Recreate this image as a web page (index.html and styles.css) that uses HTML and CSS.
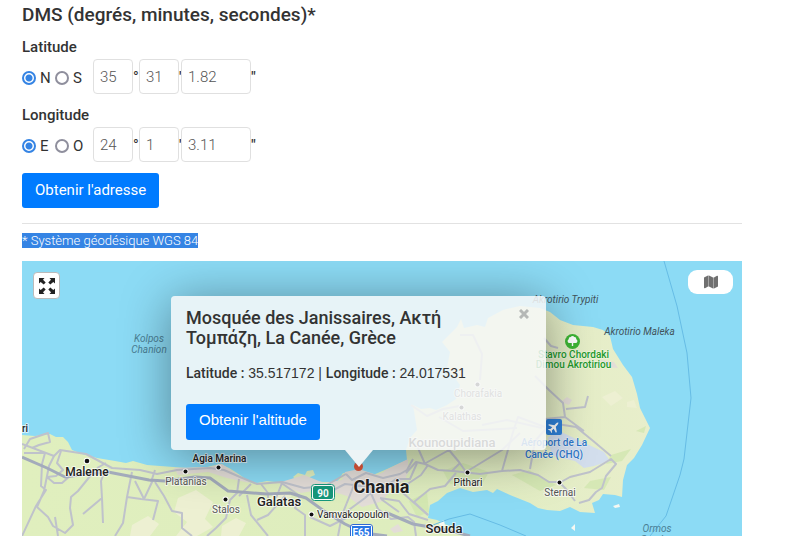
FILE: index.html
```html
<!DOCTYPE html>
<html lang="fr">
<head>
<meta charset="utf-8">
<meta name="viewport" content="width=device-width, initial-scale=1">
<title>Coordonnées GPS</title>
<link rel="stylesheet" href="styles.css">
</head>
<body>
<main class="page">
  <form class="dms">
    <h2 class="dms-title">DMS (degrés, minutes, secondes)*</h2>
    <fieldset class="group">
      <legend class="group-label">Latitude</legend>
      <div class="row">
        <label class="choice"><input class="radio" type="radio" name="lat" checked>N</label>
        <label class="choice choice-last"><input class="radio" type="radio" name="lat">S</label>
        <input class="field" id="lat-d" type="text" value="35" aria-label="Latitude degrés"><label class="unit unit-wide" for="lat-d">°</label>
        <input class="field" id="lat-m" type="text" value="31" aria-label="Latitude minutes"><label class="unit" for="lat-m">'</label>
        <input class="field field-wide" id="lat-s" type="text" value="1.82" aria-label="Latitude secondes"><label class="unit unit-wide" for="lat-s">"</label>
      </div>
    </fieldset>
    <fieldset class="group">
      <legend class="group-label">Longitude</legend>
      <div class="row">
        <label class="choice"><input class="radio" type="radio" name="lng" checked>E</label>
        <label class="choice choice-last"><input class="radio" type="radio" name="lng">O</label>
        <input class="field" id="lng-d" type="text" value="24" aria-label="Longitude degrés"><label class="unit unit-wide" for="lng-d">°</label>
        <input class="field" id="lng-m" type="text" value="1" aria-label="Longitude minutes"><label class="unit" for="lng-m">'</label>
        <input class="field field-wide" id="lng-s" type="text" value="3.11" aria-label="Longitude secondes"><label class="unit unit-wide" for="lng-s">"</label>
      </div>
    </fieldset>
    <button class="btn" type="button">Obtenir l'adresse</button>
  </form>
  <p class="note"><span class="selected">* Système géodésique WGS 84</span></p>

  <section class="map">
    <svg class="map-canvas" viewBox="22 261 720 275" preserveAspectRatio="xMinYMin slice">
      <defs>
        <linearGradient id="land" x1="0" y1="0" x2="1" y2="0"><stop offset="0" stop-color="#e0efbe"/><stop offset=".6" stop-color="#deedbe"/><stop offset="1" stop-color="#e8eecb"/></linearGradient>
      </defs>
      <path fill="#8cdbf5" d="M22 261H742V536H22z"/>
      <path fill="url(#land)" d="M22 435L35 436L50 434L56 437L63 437L68 442L72 450L82 454L97 458L115 461L126 463L133 461L147 465L160 466L187 468L207 467L220 464L229 468L237 473L250 482L257 483L267 481L283 483L290 481L297 480L293 477L298 473L305 475L307 471L313 470L315 475L310 477L309 480L323 482L337 482L343 473L349 474L357 469L363 472L373 475L387 469L400 463L407 460L406 450L410 438L417 430L413 405L421 409L430 408L436 410L447 405L456 399L460 385L455 378L447 368L450 352L442 342L457 327L461 319L464 328L477 325L485 327L488 318L503 310L520 306L540 308L550 312L560 320L573 325L593 327L603 330L610 336L613 349L623 365L632 377L637 394L640 408L645 418L650 428L642 445L634 458L627 465L623 480L622 497L615 495L603 494L599 500L592 503L595 513L580 512L570 507L560 511L547 510L538 508L530 503L510 495L497 489L493 493L487 490L473 492L460 488L447 493L438 501L430 505L428 518L437 520L447 525L467 536H22z"/>
      <g fill="#edf0d2">
        <path d="M178 498l18-8 17 12-8 17 8 8-16 9h-21l11-14-13-10z"/>
        <path d="M132 525l16-9 11 8-9 12h-20zM222 526l14-8 10 5-7 13h-18zM275 492l17 4-10 6-13-2z"/>
        <path d="M602 397l13-6 8 7-12 8zM627 402l7-2 3 8-10-1z"/>
      </g>
      <g fill="#cfe5ac" opacity=".7">
        <path d="M443 471l20-8 26 9-8 14-31-2zM611 455l20-6-9 12-16 3zM512 475l17-5 27 15-16 6zM590 481l21-4-7 13-20-2zM636 431l10-5-2 7zM409 501l18-9 2 20-12 5z"/>
      </g>
      <g fill="#e3ddd8">
        <path d="M174 468l36-1 12-3 15 10 13 9-23-5-19-6-30 3zM278 483l26-8 20 8 18-3 3-8 14-3 18 6 31-14-2 18-15 9-8 13-21 6-15-11-22-7-24 4z"/>
        <path d="M384 471l24-12v15l-21 11zM561 402l6-5 5 3-3 5zM600 360l14 2 4 6-12-1zM390 529l8-5 5 7-9 2z"/>
      </g>
      <path fill="#d3deed" d="M548 438l9-8 17 8 30 14 6 9-16 5-10 2-9-7-23-5z"/>
      <path fill="#f5f8f2" d="M613 506l6-2 1 3-5 1zM571 528l4-4v7zM440 522l4-2 1 6-6-1z"/>

      <g class="road">
        <path d="M22 444L54 456L60 450L86 454L112 468L140 470L157 474L177 470L210 468L224 470L240 477L257 484L282 482L304 488L325 486L346 474"/>
        <path d="M24 449L30 439L48 433L50 442L39 445L32 448M24 453L45 453L42 464L41 486L46 490L36 506L22 536M54 456L49 466L44 491L37 507M61 451L57 463L63 470L56 476L47 477L54 483L62 483L70 476M37 507L48 517L53 526L65 533L73 525L70 508L71 497L78 491L91 475L101 472M55 517L58 536"/>
        <path d="M104 473L101 481L102 498L83 514M102 498L103 523M132 472L127 497L123 523L115 536M127 497L141 499L158 501L153 520M135 481L144 499L153 480M155 482L164 496L172 511L182 513L182 528L192 536M155 470L151 482M106 463L97 468"/>
        <path d="M239 479L237 493L230 500L226 518L216 528L207 536M251 484L239 496M261 484L268 493L268 498M282 483L276 498M280 482L300 496L295 508L305 515L305 536M285 496L268 515L257 520M247 495L251 515L268 536M310 517L330 526L346 518"/>
        <path d="M346 474L352 480L366 473L383 478L400 474L407 470L413 459M322 496L345 484L363 486L382 489L396 479L410 479L417 463M346 512L365 498L380 484M356 480L342 515L338 536M369 489L378 509L391 519L408 517L414 522L416 536M380 498L399 501L409 514L428 520M392 483L402 492L412 501L428 515M381 499L399 512"/>
        <path d="M406 473L416 462L425 464L438 470L453 471L480 474L502 471L520 470L538 475L549 482L561 482L570 477L590 472L611 459L616 464L606 476L602 488L596 492L589 500L579 503M424 464L449 450L459 462L466 472M466 472L502 450L520 433M502 471L513 432L518 417L545 427M425 464L418 448L411 440M452 471L460 463M530 469L535 441L551 423M551 423L576 427L592 440L611 456M545 419L565 417L563 403L549 390L535 376M565 417L584 431M566 409L585 407L588 396M411 405L427 416L443 409L460 406M439 417L463 431L517 428"/>
        <path d="M482 425L507 420L542 428M460 335L473 335L482 354L480 380M559 482L566 489L575 501M428 465L421 475L406 485M428 515L414 502L430 489L445 486L456 473M544 338L551 346L558 348"/>
      </g>
      <path class="highway" d="M22 457L47 468L65 477L79 475L108 472L149 480L165 481L195 477L210 478L228 491L267 494L290 493L306 498L324 511L345 524L364 533L387 536M385 512L413 524L447 530L470 536"/>
      <path fill="none" stroke="#66bce5" d="M664 261L677 306L687 353L691 398L684 459L680 475L666 516L650 536M433 525L449 519L470 514L500 525L526 536"/>

      <g class="dots">
        <circle cx="87" cy="461" r="2.3"/><circle cx="185.500" cy="471.500" r="2"/><circle cx="218.500" cy="467.500" r="2"/><circle cx="225.500" cy="499.500" r="2"/><circle cx="311.500" cy="514.500" r="2"/><circle cx="467.500" cy="472.500" r="2"/><circle cx="559.500" cy="482.500" r="2"/><circle cx="477.500" cy="384.500" r="2"/><circle cx="461.500" cy="407.500" r="2"/>
      </g>
      <g class="place">
        <text class="town" x="22" y="432">ri</text>
        <text class="town town-md" x="87" y="476" text-anchor="middle">Maleme</text>
        <text class="village" x="186" y="485" text-anchor="middle">Platanias</text>
        <text class="town" x="219.500" y="462" text-anchor="middle">Agia Marina</text>
        <text class="village" x="226" y="513" text-anchor="middle">Stalos</text>
        <text class="town town-lg" x="279" y="506" text-anchor="middle">Galatas</text>
        <text class="village village-dark" x="317" y="518">Vamvakopoulon</text>
        <text class="city" x="381.500" y="493" text-anchor="middle">Chania</text>
        <text class="town town-lg" x="444" y="533" text-anchor="middle">Souda</text>
        <text class="village village-dark" x="468" y="486" text-anchor="middle">Pithari</text>
        <text class="village" x="560" y="496" text-anchor="middle">Sternai</text>
        <text class="village" x="478" y="397" text-anchor="middle">Chorafakia</text>
        <text class="village" x="462" y="420" text-anchor="middle">Kalathas</text>
        <text class="town town-lg" x="452" y="447" text-anchor="middle">Kounoupidiana</text>
      </g>
      <g class="water" text-anchor="middle">
        <text x="149" y="342">Kolpos</text><text x="149" y="353">Chanion</text>
        <text x="657" y="532">Ormos</text><text x="657" y="543">Soudas</text>
      </g>
      <g class="cape" text-anchor="middle"><text x="565.500" y="303">Akrotirio Trypiti</text><text x="639.500" y="335">Akrotirio Maleka</text></g>
      <g class="park" text-anchor="middle"><text x="573.500" y="358">Stavro Chordaki</text><text x="573.500" y="368">Dimou Akrotiriou</text></g>
      <circle cx="572.500" cy="341.500" r="7.500" fill="#3eb535"/>
      <path fill="#fff" d="M571.800 346v-3h-2.300a2 2 0 0 1-.8-3.800a2 2 0 0 1 2-2.200a2.200 2.200 0 0 1 3.600 0a2 2 0 0 1 2 2.200a2 2 0 0 1-.8 3.800h-2.300v3z"/>
      <g class="airport" text-anchor="middle"><text x="554" y="446">Aéroport de La</text><text x="554" y="458">Canée (CHQ)</text></g>
      <rect x="546" y="419" width="16" height="16" rx="2" fill="#2f81d8"/>
      <path transform="translate(554 427) rotate(45)" fill="#fff" d="M0-6.200Q1-5.500 1-3.500V-1.500L5.500 1.500V2.800L1 1.500V4L2.500 5.200V6L0 5.300L-2.500 6V5.200L-1 4V1.500L-5.500 2.800V1.500L-1-1.500V-3.500Q-1-5.500 0-6.200z"/>
      <rect x="311.500" y="484.500" width="23" height="16" rx="3" fill="#fff" stroke="#16987b"/><rect x="313" y="486" width="20" height="13" rx="2" fill="#16987b"/>
      <text class="shield" x="323" y="496.500" text-anchor="middle">90</text>
      <path fill="#fff" stroke="#3068d2" d="M350.500 527q0-2.500 2.500-2.500h17q2.500 0 2.500 2.500v12h-22z"/><path fill="#2876e5" d="M352 526h19v12h-19z"/>
      <text class="shield" x="361" y="536" text-anchor="middle">E65</text>
      <circle cx="358.500" cy="466.500" r="4.500" fill="#dc563a"/>
    </svg>
    <button class="fullscreen" type="button" aria-label="Plein écran">
      <svg width="16" height="16" viewBox="0 0 16 16" fill="#222"><path d="M0 0h5.500L4 1.700L6.700 4.500L4.700 6.500L1.700 4L0 5.500z"/><path transform="matrix(-1 0 0 1 16 0)" d="M0 0h5.500L4 1.700L6.700 4.500L4.700 6.500L1.700 4L0 5.500z"/><path transform="matrix(1 0 0 -1 0 16)" d="M0 0h5.500L4 1.700L6.700 4.500L4.700 6.500L1.700 4L0 5.500z"/><path transform="matrix(-1 0 0 -1 16 16)" d="M0 0h5.500L4 1.700L6.700 4.500L4.700 6.500L1.700 4L0 5.500z"/></svg>
    </button>
    <button class="layers" type="button" aria-label="Type de carte">
      <svg width="14" height="14" viewBox="0 0 14 14"><path fill="#707070" d="M0 2.500L4 .5V11.500L1 13.200Q0 13.500 0 12.500zM5 .5L9 2.500V13.500L5 11.500zM10 2.500L13 .8Q14 .5 14 1.500V11.500L10 13.500z"/><path fill="#a5a5a5" d="M4 .5h1v11H4zM9 2.500h1v11H9z"/></svg>
    </button>
    <article class="popup">
      <button class="close" type="button" aria-label="Fermer"><svg width="10" height="10" viewBox="0 0 10 10"><path d="M1 1L9 9M9 1L1 9" stroke="#b5b8b6" stroke-width="3"/></svg></button>
      <h3 class="popup-title">Mosquée des Janissaires, Ακτή Τομπάζη, La Canée, Grèce</h3>
      <p class="coords"><strong>Latitude :</strong> 35.517172 | <strong>Longitude :</strong> 24.017531</p>
      <button class="btn btn-popup" type="button">Obtenir l'altitude</button>
    </article>
  </section>
</main>
</body>
</html>
```
FILE: styles.css
```css
* { box-sizing: border-box; }
body {
  margin: 0;
  background: #fff;
  color: #333;
  font: 400 15px/20px Roboto, "Liberation Sans", sans-serif;
  overflow: hidden;
}
.page { padding: 4px 54px 0 22px; }
.dms { padding-bottom: 15px; border-bottom: 1px solid #e2e2e2; }
.dms-title { margin: 0 0 11px; font-size: 19px; line-height: 22px; font-weight: 500; }
.group { margin: 0 0 11px; padding: 0; border: 0; min-width: 0; }
.group-label { padding: 0; margin-bottom: 2px; font-weight: 500; }
.row { display: flex; align-items: center; }
.choice { display: flex; align-items: center; gap: 4px; width: 33px; padding-top: 3px; }
.choice-last { width: 38px; }
.radio {
  appearance: none;
  width: 14px;
  height: 14px;
  margin: 0;
  border: 2px solid #8f8f9d;
  border-radius: 50%;
  background: #fff;
}
.radio:checked { border-color: #3584e4; background: radial-gradient(circle, #3584e4 3px, #fff 4px); }
.field {
  width: 40px;
  height: 35px;
  padding: 0 6px;
  border: 1px solid #e0e0e0;
  border-radius: 4px;
  color: #555;
  font: 300 15px/20px Roboto, sans-serif;
  background: #fff;
}
.field-wide { width: 70px; }
.unit { width: 2px; font-weight: 500; }
.unit-wide { width: 6px; }
.btn {
  display: block;
  height: 35px;
  padding: 0 13px 1px;
  border: 0;
  border-radius: 3px;
  background: #007bff;
  color: #fff;
  font: 400 15px/20px Roboto, sans-serif;
}
.note { margin: 7px 0 10px; font-size: 13px; line-height: 20px; font-weight: 300; }
.selected { background: #3584e4; color: #fff; }

.map { position: relative; overflow: hidden; }
.map-canvas { display: block; width: 100%; min-height: 275px; }
.map-canvas text { font-family: Roboto, sans-serif; paint-order: stroke; stroke-linejoin: round; }
.road { fill: none; stroke: #bfc2cb; stroke-width: 2; stroke-linejoin: round; }
.highway { fill: none; stroke: #a3abbb; stroke-width: 3; stroke-linejoin: round; }
.dots { fill: #111; stroke: #fff; stroke-width: 2; paint-order: stroke; }
.place text { stroke: #ffffffb0; stroke-width: 2px; fill: #222; }
.village { font-size: 10px; }
.place .village { fill: #555; }
.place .village-dark { fill: #222; }
.town { font-size: 10px; font-weight: 500; }
.town-md { font-size: 12px; }
.town-lg { font-size: 13px; }
.city { font-size: 18px; font-weight: 700; }
.water { font-size: 10px; font-style: italic; fill: #4b7f94; }
.cape { font-size: 10px; font-style: italic; fill: #42535b; }
.park { font-size: 10px; font-weight: 500; fill: #239a2b; stroke: #ffffff90; stroke-width: 1px; }
.airport { font-size: 10px; font-weight: 500; fill: #2e77c9; stroke: #ffffff90; stroke-width: 1px; }
.shield { font-size: 10px; font-weight: 700; fill: #fff; }

.fullscreen {
  position: absolute;
  top: 11px;
  left: 11px;
  width: 27px;
  height: 27px;
  padding: 0;
  border: 1px solid #bbb;
  border-radius: 4px;
  background: #fff;
  display: grid;
  place-items: center;
}
.layers {
  position: absolute;
  top: 9px;
  right: 9px;
  width: 45px;
  height: 24px;
  padding: 0;
  border: 0;
  border-radius: 9px;
  background: #fff;
  display: grid;
  place-items: center;
}
.popup {
  position: absolute;
  top: 35px;
  left: 149px;
  width: 375px;
  padding: 12px 15px 10px;
  border-radius: 4px;
  background: #f6f7f7dc;
  box-shadow: 0 5px 50px #00000066;
}
.popup::after {
  content: "";
  position: absolute;
  top: 100%;
  left: 174px;
  border: 14px solid transparent;
  border-top: 17px solid #edf4f6;
  border-bottom: 0;
}
.popup-title { margin: 0 60px 15px 0; font-size: 18px; line-height: 20px; font-weight: 500; }
.coords { margin: 0 0 21px; font: 14px/20px "Liberation Sans", sans-serif; }
.coords strong { font-family: Roboto, sans-serif; font-weight: 500; }
.btn-popup { height: 36px; padding-bottom: 4px; font-family: "Liberation Sans", sans-serif; }
.close { position: absolute; top: 13px; right: 17px; padding: 0; border: 0; background: none; line-height: 0; }
```
